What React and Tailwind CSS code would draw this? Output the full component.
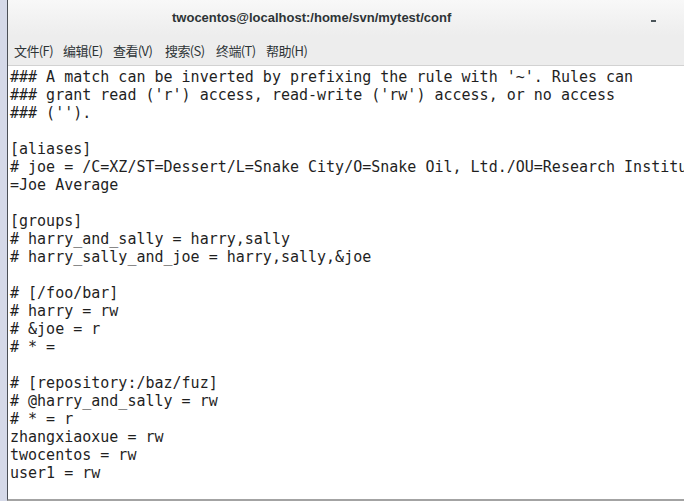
import React from "react";

const menus = [
  { label: "文件(F)", w: "w-[49px]" },
  { label: "编辑(E)", w: "w-[50px]" },
  { label: "查看(V)", w: "w-[52px]" },
  { label: "搜索(S)", w: "w-[51px]" },
  { label: "终端(T)", w: "w-[50px]" },
  { label: "帮助(H)", w: "w-[50px]" },
];

const lines = [
  "### A match can be inverted by prefixing the rule with '~'. Rules can",
  "### grant read ('r') access, read-write ('rw') access, or no access",
  "### ('').",
  "",
  "[aliases]",
  "# joe = /C=XZ/ST=Dessert/L=Snake City/O=Snake Oil, Ltd./OU=Research Institute/CN",
  "=Joe Average",
  "",
  "[groups]",
  "# harry_and_sally = harry,sally",
  "# harry_sally_and_joe = harry,sally,&joe",
  "",
  "# [/foo/bar]",
  "# harry = rw",
  "# &joe = r",
  "# * =",
  "",
  "# [repository:/baz/fuz]",
  "# @harry_and_sally = rw",
  "# * = r",
  "zhangxiaoxue = rw",
  "twocentos = rw",
  "user1 = rw",
];

export default function App() {
  return (
    <div className="flex h-[501px] w-[684px] overflow-hidden bg-[#d5d9e8]">
      <div className="w-[7px] shrink-0" />
      <div className="flex min-w-0 flex-1 flex-col border-b-2 border-l border-b-[#a3a3a3] border-l-[#4b4f56] bg-white">
        {/* title bar */}
        <div className="flex h-[36px] shrink-0 items-center bg-gradient-to-b from-[#f8f8f8] to-[#ededed]">
          <div className="pl-[164px] text-[13px] font-bold text-[#2e3436] [font-family:'Liberation_Sans',sans-serif]">
            twocentos@localhost:/home/svn/mytest/conf
          </div>
          <div className="ml-auto mr-[28px] mt-[6px] h-[2px] w-[5px] bg-[#4a5459]" />
        </div>
        {/* menu bar */}
        <div className="flex h-[30px] shrink-0 items-center border-b border-[#d2d2d2] bg-[#ededed] pl-[6px] text-[13px] tracking-[-0.6px] text-[#2e3436] [font-family:'Noto_Sans_CJK_SC',sans-serif]">
          {menus.map((m) => (
            <span key={m.label} className={`${m.w} shrink-0 whitespace-nowrap`}>
              {m.label}
            </span>
          ))}
        </div>
        {/* terminal */}
        <div className="flex-1 overflow-hidden pl-[2px] pt-[2px] text-[15px] leading-[18px] text-[#1f1f1f] [font-family:'DejaVu_Sans_Mono',monospace]">
          {lines.map((l, i) => (
            <div key={i} className="h-[18px] whitespace-pre">
              {l}
            </div>
          ))}
        </div>
      </div>
    </div>
  );
}
